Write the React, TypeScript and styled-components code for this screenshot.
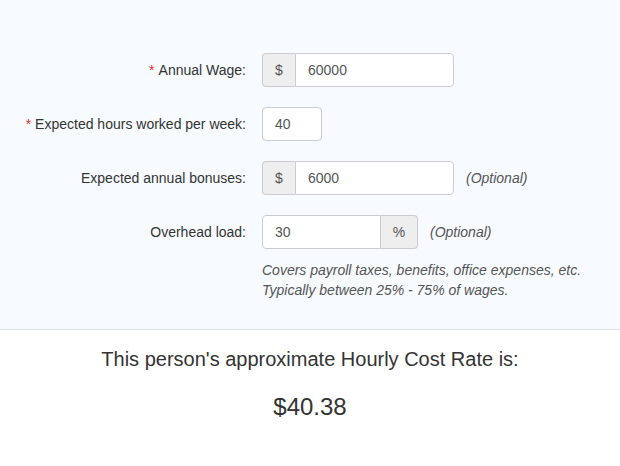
import React from "react";
import styled, { createGlobalStyle } from "styled-components";

const Global = createGlobalStyle`
  html, body { margin: 0; padding: 0; background: #fff; }
  body { font-family: "Liberation Sans", Arial, sans-serif; font-size: 14px; color: #333; }
  * { box-sizing: border-box; }
`;

const FormSection = styled.section`
  background: #f7fbff;
  border-bottom: 1px solid #e3e6e8;
  padding: 53px 0 30px;
  height: 330px;
`;

const Row = styled.div<{ $mb?: number }>`
  display: grid;
  grid-template-columns: 246px 1fr;
  column-gap: 16px;
  align-items: center;
  margin-bottom: ${(p) => (p.$mb ?? 20)}px;
`;

const Label = styled.label`
  text-align: right;
  font-size: 14px;
  color: #333;
  line-height: 20px;
`;

const Req = styled.span`
  color: #e0302a;
  margin-right: 4px;
`;

const Controls = styled.div`
  display: flex;
  align-items: center;
  gap: 12px;
`;

const Group = styled.div<{ $w: number }>`
  display: flex;
  width: ${(p) => p.$w}px;
  height: 34px;
`;

const Addon = styled.span<{ $side: "left" | "right"; $w: number }>`
  flex: 0 0 ${(p) => p.$w}px;
  display: flex;
  align-items: center;
  justify-content: center;
  background: #eee;
  border: 1px solid #ccc;
  color: #555;
  font-size: 14px;
  border-radius: ${(p) => (p.$side === "left" ? "4px 0 0 4px" : "0 4px 4px 0")};
  ${(p) => (p.$side === "left" ? "border-right: 0;" : "border-left: 0;")}
`;

const Input = styled.input<{ $round?: "all" | "left" | "right" }>`
  flex: 1 1 auto;
  min-width: 0;
  height: 34px;
  padding: 6px 12px;
  border: 1px solid #ccc;
  background: #fff;
  color: #555;
  font-family: "Liberation Sans", Arial, sans-serif;
  font-size: 14px;
  outline: none;
  border-radius: ${(p) =>
    p.$round === "left" ? "4px 0 0 4px" : p.$round === "right" ? "0 4px 4px 0" : "4px"};
`;

const Optional = styled.span`
  font-style: italic;
  color: #555;
  font-size: 14px;
`;

const Help = styled.p`
  margin: 11px 0 0 262px;
  font-style: italic;
  font-size: 14px;
  line-height: 20px;
  color: #555;
`;

const Result = styled.section`
  text-align: center;
  padding-top: 15px;
`;

const ResultTitle = styled.h2`
  margin: 0;
  font-weight: normal;
  font-size: 20px;
  line-height: 28px;
  color: #333;
`;

const Price = styled.div`
  margin-top: 19px;
  font-size: 24px;
  line-height: 30px;
  color: #333;
`;

export default function App() {
  return (
    <>
      <Global />
      <FormSection>
        <Row>
          <Label>
            <Req>*</Req>Annual Wage:
          </Label>
          <Controls>
            <Group $w={192}>
              <Addon $side="left" $w={33}>$</Addon>
              <Input $round="right" defaultValue="60000" />
            </Group>
          </Controls>
        </Row>
        <Row>
          <Label>
            <Req>*</Req>Expected hours worked per week:
          </Label>
          <Controls>
            <Group $w={60}>
              <Input $round="all" defaultValue="40" />
            </Group>
          </Controls>
        </Row>
        <Row>
          <Label>Expected annual bonuses:</Label>
          <Controls>
            <Group $w={192}>
              <Addon $side="left" $w={33}>$</Addon>
              <Input $round="right" defaultValue="6000" />
            </Group>
            <Optional>(Optional)</Optional>
          </Controls>
        </Row>
        <Row $mb={0}>
          <Label>Overhead load:</Label>
          <Controls>
            <Group $w={156}>
              <Input $round="left" defaultValue="30" />
              <Addon $side="right" $w={37}>%</Addon>
            </Group>
            <Optional>(Optional)</Optional>
          </Controls>
        </Row>
        <Help>
          Covers payroll taxes, benefits, office expenses, etc.
          <br />
          Typically between 25% - 75% of wages.
        </Help>
      </FormSection>
      <Result>
        <ResultTitle>This person's approximate Hourly Cost Rate is:</ResultTitle>
        <Price>$40.38</Price>
      </Result>
    </>
  );
}
